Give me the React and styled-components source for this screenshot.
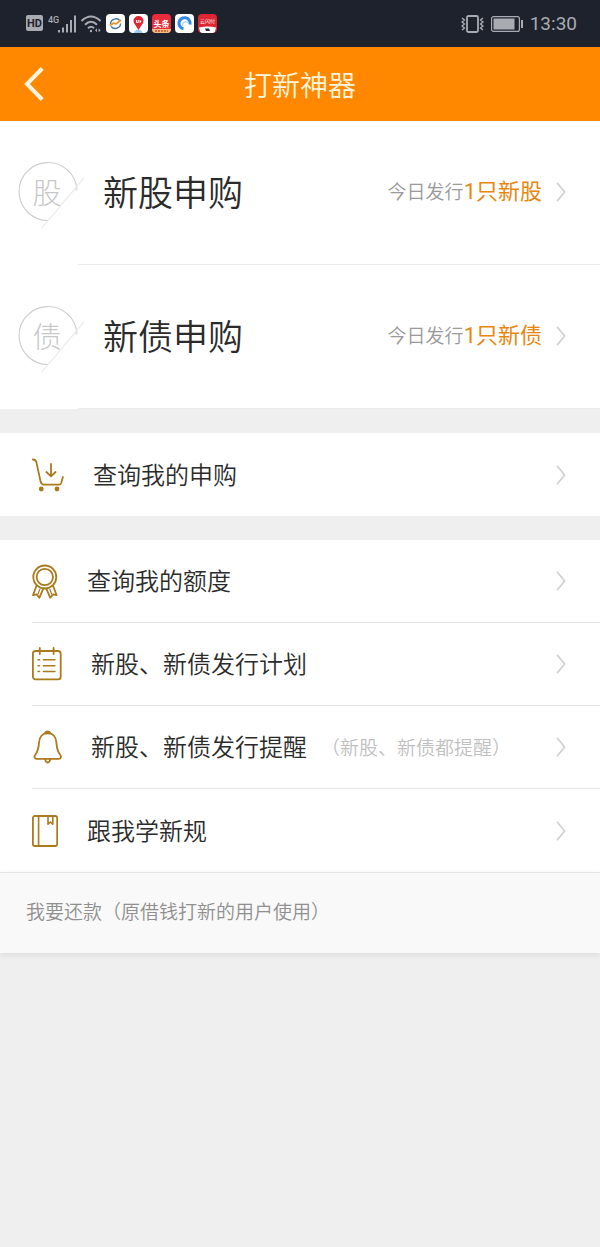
import React from 'react';
import styled, { createGlobalStyle } from 'styled-components';

const GlobalStyle = createGlobalStyle`
    * {
        box-sizing: border-box;
    }

    body {
        margin: 0;
        background: #efefef;
        color: #2b2b2b;
        font-family: 'Noto Sans CJK SC', sans-serif;
        font-weight: 350;
    }
`;

const StatusBar = styled.div`
    display: flex;
    justify-content: space-between;
    align-items: center;
    height: 47px;
    padding: 0 23px 0 26px;
    background: #1e222d;
    color: #a9abb3;
`;

const StatusGroup = styled.div`
    display: flex;
    align-items: center;
    gap: ${(props) => props.$gap}px;

    svg {
        display: block;
    }
`;

const Time = styled.span`
    font-family: Roboto, sans-serif;
    font-size: 19px;
    font-weight: 400;
    line-height: 24px;
`;

const Header = styled.header`
    display: grid;
    grid-template-columns: 72px 1fr 72px;
    align-items: center;
    height: 74px;
    background: #ff8800;
`;

const BackButton = styled.button`
    display: flex;
    justify-content: center;
    align-items: center;
    height: 100%;
    padding: 0 4px 0 0;
    border: 0;
    background: none;
    color: #fff4dc;
    cursor: pointer;
`;

const Title = styled.h1`
    margin: 0;
    color: #fff4dc;
    font-size: 28px;
    font-weight: 350;
    line-height: 40px;
    text-align: center;
`;

const Section = styled.section`
    margin-bottom: 24px;
    background: #ffffff;
`;

const Row = styled.a`
    display: flex;
    align-items: center;
    color: inherit;
    text-decoration: none;
`;

const OfferRow = styled(Row)`
    height: 143px;
    padding: 0 34px 2px 18px;
`;

const OfferDivider = styled.hr`
    height: 1px;
    margin: 0 0 0 78px;
    border: 0;
    background: #ececec;
`;

const Badge = styled.span`
    display: grid;
    grid-template-columns: 70px;
    margin-right: 15px;

    > * {
        grid-area: 1 / 1;
    }
`;

const BadgeText = styled.span`
    width: 58px;
    color: #c8c8c8;
    font-size: 29px;
    font-weight: 300;
    line-height: 70px;
    text-align: center;
`;

const OfferName = styled.span`
    flex: 1;
    padding-bottom: 2px;
    font-size: 35px;
    line-height: 48px;
`;

const OfferInfo = styled.span`
    margin-right: 14px;
    color: #999999;
    font-size: 19px;
    line-height: 34px;
`;

const Count = styled.strong`
    color: #e8870f;
    font-family: Roboto, 'Noto Sans CJK SC', sans-serif;
    font-size: 22px;
    font-weight: 400;
`;

const MenuRow = styled(Row)`
    height: 83px;
    margin-left: 32px;
    padding-right: 34px;
    border-bottom: ${(props) => (props.$divider ? '1px solid #e6e6e6' : '0')};
`;

const MenuIcon = styled.svg`
    flex: none;
    margin-right: 29px;
    fill: none;
    stroke: #aa7a1c;
    stroke-width: 1.8;
    stroke-linecap: round;
    stroke-linejoin: round;
`;

const MenuLabel = styled.span`
    padding-bottom: 2px;
    font-size: 24px;
    line-height: 36px;
`;

const MenuNote = styled.span`
    margin-left: 14px;
    color: #bfbfbf;
    font-size: 19px;
    line-height: 36px;
`;

const Arrow = styled.svg`
    flex: none;
    margin-left: auto;
`;

const Repay = styled.a`
    display: block;
    padding: 22px 26px 26px;
    border-top: 1px solid #e4e4e4;
    background: #f9f9f9;
    box-shadow: 0 2px 6px rgba(0, 0, 0, 0.08);
    color: #8f8f8f;
    font-size: 19px;
    line-height: 32px;
    text-decoration: none;
`;

function Chevron() {
    return (
        <Arrow width="10" height="20" viewBox="0 0 10 20" fill="none" stroke="#d2d2d2" strokeWidth="1.8">
            <path d="M1 .8 8.6 10 1 19.2" />
        </Arrow>
    );
}

function CartIcon() {
    return (
        <MenuIcon width="32" height="34" viewBox="0 0 32 34">
            <path d="M.8 1.5c2 0 3 .6 3.5 2.4L8.6 23.6c.5 2.2 1.3 3.1 3.4 3.1h15.2c1.2 0 1.6-.5 2-1.7l1.7-6" />
            <path d="M19 6v12M14.4 14l4.6 4.3 4.6-4.3" />
            <circle cx="9.3" cy="31" r="1.5" fill="#aa7a1c" />
            <circle cx="25" cy="31" r="1.5" fill="#aa7a1c" />
        </MenuIcon>
    );
}

function MedalIcon() {
    return (
        <MenuIcon width="26" height="35" viewBox="0 0 26 35">
            <circle cx="12.8" cy="13" r="11.5" />
            <circle cx="12.8" cy="13" r="8.2" />
            <path d="M4.4 22 1 31.2l3.6-.8 2.7 3.4 3.9-9M21.2 22l3.4 9.2-3.6-.8-2.7 3.4-3.9-9" />
            <path d="M7.8 25.4 6 30M17.8 25.4l1.8 4.6" strokeWidth="1.2" />
        </MenuIcon>
    );
}

function PlanIcon() {
    return (
        <MenuIcon width="30" height="34" viewBox="0 0 30 34">
            <rect x=".9" y="4" width="27.8" height="28.4" rx="2.6" />
            <path d="M7.8 1v6M21.6 1v6" />
            <path d="M6 12.7h1.6M11.4 12.7H23M6 18.7h1.6M11.4 18.7H23M6 24.5h1.6M11.4 24.5H23" strokeWidth="1.4" />
        </MenuIcon>
    );
}

function BellIcon() {
    return (
        <MenuIcon width="30" height="34" viewBox="0 0 30 34">
            <path d="M15.7 3.2c-5.4 0-8.3 4.2-8.7 9.4-.4 6-.8 8.4-3.6 11.9-1.6 2-1 4.3 1.2 4.3h22.2c2.2 0 2.8-2.3 1.2-4.3-2.8-3.5-3.2-5.9-3.6-11.9-.4-5.2-3.3-9.4-8.7-9.4z" />
            <path d="M13 3.3c.4-1.5 1.3-2 2.7-2s2.3.5 2.7 2z" fill="#aa7a1c" />
            <path d="M13.3 29.5c.2 2.2 1 3 2.4 3s2.2-.8 2.4-3" />
        </MenuIcon>
    );
}

function BookIcon() {
    return (
        <MenuIcon width="26" height="34" viewBox="0 0 26 34">
            <rect x=".9" y="2" width="24.3" height="30" rx="2" />
            <path d="M6.6 2v30M16 2.2v8L18.4 8l2.4 2.2v-8" strokeWidth="1.6" />
        </MenuIcon>
    );
}

function OfferBadge({ text }) {
    return (
        <Badge>
            <svg width="70" height="72" viewBox="0 0 70 72" fill="none">
                <path d="M59 34A29 29 0 1 0 30.5 64.500" stroke="#cfcfcf" strokeWidth="1.2" />
                <path d="M66 22 23 73" stroke="#ececec" strokeWidth="1.2" />
                <path d="M59 34 56 33.800" stroke="#e4e4e4" />
            </svg>
            <BadgeText>{text}</BadgeText>
        </Badge>
    );
}

function AppIcon({ children, fill = '#ffffff' }) {
    return (
        <svg width="19" height="19" viewBox="0 0 19 19" fill="none">
            <rect width="19" height="19" rx="4" fill={fill} />
            {children}
        </svg>
    );
}

function Notifications() {
    return (
        <StatusGroup $gap={5}>
            <svg width="17" height="17" viewBox="0 0 17 17">
                <rect width="17" height="16" rx="2" fill="#a9abb3" />
                <text x="8.5" y="12" textAnchor="middle" fontFamily="Roboto" fontSize="11" fontWeight="700" fill="#1e222d">HD</text>
            </svg>
            <svg width="28" height="19" viewBox="0 0 28 19" fill="#a9abb3">
                <text x="0" y="8.5" fontFamily="Roboto" fontSize="9" fontWeight="500">4G</text>
                <path d="M10 16h2v2.5h-2zM14 13.5h2v5h-2zM18 10h2v8.5h-2zM22 6h2v12.500h-2zM26 1.5h2v17h-2z" />
            </svg>
            <svg width="20" height="19" viewBox="0 0 20 19" fill="none" stroke="#a9abb3" strokeWidth="2">
                <path d="M.5 7q9.500-9 19 0M4 10.800q6-6 12 0M7 14.300q3-3 6 0" />
                <circle cx="10" cy="17" r="1.2" fill="#a9abb3" stroke="none" />
                <path d="M16 14.200v4l-2-2zM17.600 14.200v4l2-2z" fill="#a9abb3" stroke="none" />
            </svg>
            <StatusGroup $gap={4}>
                <AppIcon>
                    <path d="M14.2 7A5.4 5.4 0 0 0 4.5 10" stroke="#467ba5" strokeWidth="1.4" />
                    <path d="M5 12.5a5.4 5.4 0 0 0 9.6-3" stroke="#467ba5" strokeWidth="1.4" />
                    <path d="M4 11.5 7.500 9l2.500 1 5-4" stroke="#ee942b" strokeWidth="1.8" />
                </AppIcon>
                <AppIcon>
                    <path d="M5 19c1-4 6-5 9 0z" fill="#9ccbea" />
                    <path d="M9.5 16 6 10.500a5 5 0 1 1 7 0z" fill="#df2634" />
                    <path d="M7.5 6v2.500h1.700V6M11 6v3M11 7.500h1.300" stroke="#ffffff" />
                </AppIcon>
                <AppIcon fill="#e92b3a">
                    <path d="M0 15h19a4 4 0 0 1-4 4H4a4 4 0 0 1-4-4z" fill="#f2be84" />
                    <path d="M3 17h13" stroke="#c64931" strokeWidth="1.4" strokeDasharray="2 1" />
                    <text x="9.5" y="12.5" textAnchor="middle" fontFamily="Noto Sans CJK SC" fontSize="8" fontWeight="700" fill="#ffffff">头条</text>
                </AppIcon>
                <AppIcon>
                    <path d="M8.5 14.800A5.600 5.600 0 1 1 15 10.500" stroke="#3089e8" strokeWidth="3" />
                    <path d="M7.5 12a3.500 3.500 0 0 1 5.500-3.500" stroke="#b5dafb" strokeWidth="1.6" />
                </AppIcon>
                <AppIcon fill="#de2633">
                    <path d="M1 13.5q8.500-2 17 0l-1 4q-1 1.500-3 1.500H5q-2 0-3-1.500z" fill="#ffffff" />
                    <path d="M7 14.5h4l1 2.500H8z" fill="#22263a" />
                    <text x="9.5" y="9" textAnchor="middle" fontFamily="Noto Sans CJK SC" fontSize="5" fill="#ffffff">云闪付</text>
                </AppIcon>
            </StatusGroup>
        </StatusGroup>
    );
}

function DeviceState() {
    return (
        <StatusGroup $gap={7}>
            <svg width="23" height="18" viewBox="0 0 23 18" fill="none" stroke="#a9abb3" strokeWidth="1.4">
                <rect x="6" y="1" width="11" height="16" rx="1.5" strokeWidth="1.8" />
                <path d="M1 3l2.5 2L1 7l2.5 2L1 11l2.5 2L1 15M22 3l-2.5 2L22 7l-2.5 2 2.5 2-2.5 2 2.5 2" />
            </svg>
            <svg width="32" height="16" viewBox="0 0 32 16" fill="#a9abb3">
                <rect x=".6" y=".6" width="27.8" height="14.8" rx="2" fill="none" stroke="#a9abb3" strokeWidth="1.2" />
                <rect x="2.5" y="2.5" width="21" height="11" />
                <path d="M30 4h2v8h-2z" />
            </svg>
            <Time>13:30</Time>
        </StatusGroup>
    );
}

const offers = [
    { badge: '股', name: '新股申购', count: '1只新股' },
    { badge: '债', name: '新债申购', count: '1只新债' },
];

const menu = [
    { icon: MedalIcon, label: '查询我的额度' },
    { icon: PlanIcon, label: '新股、新债发行计划' },
    { icon: BellIcon, label: '新股、新债发行提醒', note: '（新股、新债都提醒）' },
    { icon: BookIcon, label: '跟我学新规' },
];

function App() {
    return (
        <>
            <GlobalStyle />
            <StatusBar>
                <Notifications />
                <DeviceState />
            </StatusBar>
            <Header>
                <BackButton type="button" aria-label="返回">
                    <svg width="20" height="34" viewBox="0 0 20 34" fill="none" stroke="currentColor" strokeWidth="4">
                        <path d="M18.2 1.5 3 17l15.200 15.500" />
                    </svg>
                </BackButton>
                <Title>打新神器</Title>
            </Header>
            <main>
                <Section>
                    {offers.map((offer) => (
                        <React.Fragment key={offer.name}>
                            <OfferRow href="#">
                                <OfferBadge text={offer.badge} />
                                <OfferName>{offer.name}</OfferName>
                                <OfferInfo>
                                    今日发行<Count>{offer.count}</Count>
                                </OfferInfo>
                                <Chevron />
                            </OfferRow>
                            <OfferDivider />
                        </React.Fragment>
                    ))}
                </Section>
                <Section>
                    <MenuRow href="#">
                        <CartIcon />
                        <MenuLabel>查询我的申购</MenuLabel>
                        <Chevron />
                    </MenuRow>
                </Section>
                <Section>
                    {menu.map(({ icon: Icon, label, note }, index) => (
                        <MenuRow href="#" key={label} $divider={index < menu.length - 1}>
                            <Icon />
                            <MenuLabel>{label}</MenuLabel>
                            {note && <MenuNote>{note}</MenuNote>}
                            <Chevron />
                        </MenuRow>
                    ))}
                    <Repay href="#">我要还款（原借钱打新的用户使用）</Repay>
                </Section>
            </main>
        </>
    );
}

export default App;
